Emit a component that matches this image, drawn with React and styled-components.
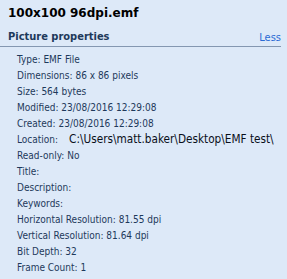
import React from "react";
import styled, { createGlobalStyle } from "styled-components";

const Global = createGlobalStyle`
  html, body {
    margin: 0;
    background: #dde9f8;
  }
`;

const Pane = styled.div`
  width: 287px;
  height: 279px;
  box-sizing: border-box;
  padding: 5px 6px 0 0;
  font-family: "DejaVu Sans Condensed", "DejaVu Sans", sans-serif;
  font-stretch: condensed;
  background: #dde9f8;
  overflow: hidden;
`;

const FileName = styled.h1`
  margin: 0 0 0 8px;
  font-family: "DejaVu Sans", sans-serif;
  font-stretch: normal;
  font-size: 12px;
  line-height: 16px;
  font-weight: bold;
  color: #000;
`;

const Header = styled.div`
  display: flex;
  align-items: flex-end;
  justify-content: space-between;
  margin-top: 8px;
  padding: 0 0 2px 8px;
  border-bottom: 1px solid #8497b1;
`;

const HeaderTitle = styled.h2`
  margin: 0;
  font-size: 11px;
  line-height: 15px;
  font-weight: bold;
  color: #1e395b;
`;

const Toggle = styled.a`
  font-size: 11px;
  line-height: 13px;
  color: #2a6bd4;
  cursor: pointer;
`;

const List = styled.div`
  display: flex;
  flex-direction: column;
  padding: 5px 0 0 17px;
`;

const Row = styled.div`
  height: 16px;
  font-size: 10px;
  line-height: 16px;
  color: #1e395b;
  white-space: nowrap;
`;

const Path = styled.span`
  margin-left: 11px;
  font-size: 11.7px;
  line-height: 1;
  color: #0a0f1a;
`;

const props = [
  ["Type", "EMF File"],
  ["Dimensions", "86 x 86 pixels"],
  ["Size", "564 bytes"],
  ["Modified", "23/08/2016 12:29:08"],
  ["Created", "23/08/2016 12:29:08"],
  ["Location", null],
  ["Read-only", "No"],
  ["Title", ""],
  ["Description", ""],
  ["Keywords", ""],
  ["Horizontal Resolution", "81.55 dpi"],
  ["Vertical Resolution", "81.64 dpi"],
  ["Bit Depth", "32"],
  ["Frame Count", "1"],
];

export default function App() {
  return (
    <Pane>
      <Global />
      <FileName>100x100 96dpi.emf</FileName>
      <Header>
        <HeaderTitle>Picture properties</HeaderTitle>
        <Toggle>Less</Toggle>
      </Header>
      <List>
        {props.map(([k, v]) =>
          v === null ? (
            <Row key={k}>
              {k}:<Path>C:\Users\matt.baker\Desktop\EMF test\</Path>
            </Row>
          ) : (
            <Row key={k}>
              {k}:{v ? ` ${v}` : ""}
            </Row>
          )
        )}
      </List>
    </Pane>
  );
}
